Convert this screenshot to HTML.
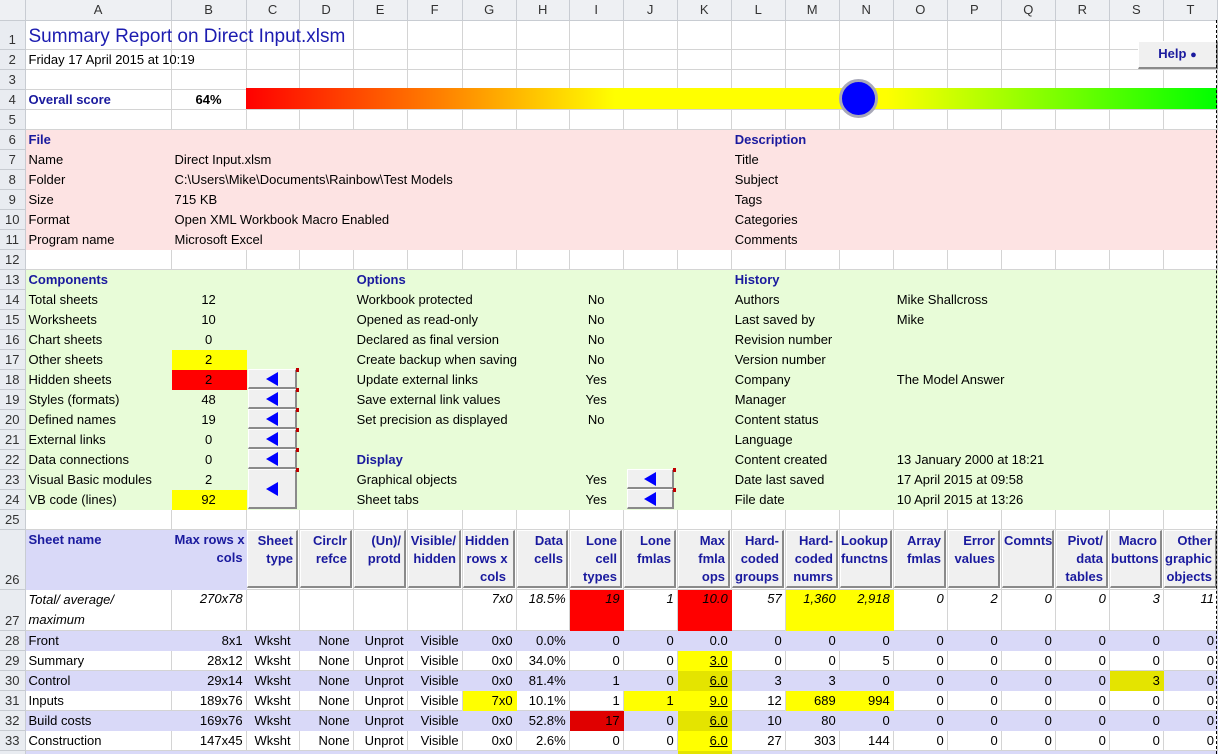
<!DOCTYPE html>
<html><head><meta charset="utf-8"><style>
body{margin:0;background:#fff}
#w{position:relative;width:1218px;height:754px;overflow:hidden;font-family:"Liberation Sans",sans-serif;font-size:13px;color:#000}
table{border-collapse:collapse;table-layout:fixed;width:1218px;position:absolute;left:0;top:0}
td{padding:0 3px;border-right:1px solid #d4d4d4;border-bottom:1px solid #d4d4d4;white-space:nowrap;overflow:visible;vertical-align:bottom;line-height:18px}
td.h{background:#e9ecf1;color:#333;text-align:center;padding:0;border-color:#c8ccd2}
tr.ch td{background:#eef0f3;color:#333;text-align:center;border-color:#c8ccd2;vertical-align:middle}
tr.p td:not(.h){background:#fde3e3;border-color:#fde3e3}
tr.g td:not(.h){background:#e8fcd8;border-color:#e8fcd8}
tr.l td:not(.h){background:#d9d9f8;border-color:#d9d9f8}
.b{font-weight:bold;color:#1a1a9e}
.r{text-align:right}.c{text-align:center}
.y{background:#ffff00!important;border-color:#ffff00!important}
.dy{background:#e4e400!important;border-color:#e4e400!important}
.red{background:#ff0000!important;border-color:#ff0000!important}
.dr{background:#e00000!important;border-color:#e00000!important}
.u{text-decoration:underline}
tr.it td{font-style:italic;vertical-align:top}
.btn{position:absolute;background:#f0f0f0;border-top:1px solid #fff;border-left:1px solid #fff;border-right:2px solid #8a8a8a;border-bottom:2px solid #8a8a8a;box-sizing:border-box}
.btn .a{position:absolute;left:50%;top:50%;margin:-7px 0 0 -6px;width:0;height:0;border-right:12px solid #0000ff;border-top:7px solid transparent;border-bottom:7px solid transparent}
.btn .t{position:absolute;right:-4px;top:-2px;width:3px;height:4px;background:#c00000}
.hb{font-weight:bold;color:#1a1a9e;text-align:right;line-height:18px;padding:1px 3px 0 0}
</style></head><body><div id="w">
<table>
<colgroup><col style="width:25px"><col style="width:146px"><col style="width:75px"><col style="width:53px"><col style="width:54px"><col style="width:54px"><col style="width:55px"><col style="width:54px"><col style="width:53px"><col style="width:54px"><col style="width:54px"><col style="width:54px"><col style="width:54px"><col style="width:54px"><col style="width:54px"><col style="width:54px"><col style="width:54px"><col style="width:54px"><col style="width:54px"><col style="width:54px"><col style="width:54px"></colgroup>
<tr class="ch" style="height:20px"><td></td><td>A</td><td>B</td><td>C</td><td>D</td><td>E</td><td>F</td><td>G</td><td>H</td><td>I</td><td>J</td><td>K</td><td>L</td><td>M</td><td>N</td><td>O</td><td>P</td><td>Q</td><td>R</td><td>S</td><td>T</td></tr>
<tr style="height:29px"><td class="h">1</td><td style="font-size:19px;color:#1c1cb0;line-height:24px">Summary Report on Direct Input.xlsm</td><td></td><td></td><td></td><td></td><td></td><td></td><td></td><td></td><td></td><td></td><td></td><td></td><td></td><td></td><td></td><td></td><td></td><td></td><td></td></tr>
<tr style="height:20px"><td class="h">2</td><td>Friday 17 April 2015 at 10:19</td><td></td><td></td><td></td><td></td><td></td><td></td><td></td><td></td><td></td><td></td><td></td><td></td><td></td><td></td><td></td><td></td><td></td><td></td><td></td></tr>
<tr style="height:20px"><td class="h">3</td><td></td><td></td><td></td><td></td><td></td><td></td><td></td><td></td><td></td><td></td><td></td><td></td><td></td><td></td><td></td><td></td><td></td><td></td><td></td><td></td></tr>
<tr style="height:20px"><td class="h">4</td><td class="b">Overall score</td><td class="c" style="font-weight:bold">64%</td><td></td><td></td><td></td><td></td><td></td><td></td><td></td><td></td><td></td><td></td><td></td><td></td><td></td><td></td><td></td><td></td><td></td><td></td></tr>
<tr style="height:20px"><td class="h">5</td><td></td><td></td><td></td><td></td><td></td><td></td><td></td><td></td><td></td><td></td><td></td><td></td><td></td><td></td><td></td><td></td><td></td><td></td><td></td><td></td></tr>
<tr class="p" style="height:20px"><td class="h">6</td><td class="b">File</td><td></td><td></td><td></td><td></td><td></td><td></td><td></td><td></td><td></td><td></td><td class="b">Description</td><td></td><td></td><td></td><td></td><td></td><td></td><td></td><td></td></tr>
<tr class="p" style="height:20px"><td class="h">7</td><td>Name</td><td>Direct Input.xlsm</td><td></td><td></td><td></td><td></td><td></td><td></td><td></td><td></td><td></td><td>Title</td><td></td><td></td><td></td><td></td><td></td><td></td><td></td><td></td></tr>
<tr class="p" style="height:20px"><td class="h">8</td><td>Folder</td><td>C:\Users\Mike\Documents\Rainbow\Test Models</td><td></td><td></td><td></td><td></td><td></td><td></td><td></td><td></td><td></td><td>Subject</td><td></td><td></td><td></td><td></td><td></td><td></td><td></td><td></td></tr>
<tr class="p" style="height:20px"><td class="h">9</td><td>Size</td><td>715 KB</td><td></td><td></td><td></td><td></td><td></td><td></td><td></td><td></td><td></td><td>Tags</td><td></td><td></td><td></td><td></td><td></td><td></td><td></td><td></td></tr>
<tr class="p" style="height:20px"><td class="h">10</td><td>Format</td><td>Open XML Workbook Macro Enabled</td><td></td><td></td><td></td><td></td><td></td><td></td><td></td><td></td><td></td><td>Categories</td><td></td><td></td><td></td><td></td><td></td><td></td><td></td><td></td></tr>
<tr class="p" style="height:20px"><td class="h">11</td><td>Program name</td><td>Microsoft Excel</td><td></td><td></td><td></td><td></td><td></td><td></td><td></td><td></td><td></td><td>Comments</td><td></td><td></td><td></td><td></td><td></td><td></td><td></td><td></td></tr>
<tr style="height:20px"><td class="h">12</td><td></td><td></td><td></td><td></td><td></td><td></td><td></td><td></td><td></td><td></td><td></td><td></td><td></td><td></td><td></td><td></td><td></td><td></td><td></td><td></td></tr>
<tr class="g" style="height:20px"><td class="h">13</td><td class="b">Components</td><td></td><td></td><td></td><td class="b">Options</td><td></td><td></td><td></td><td></td><td></td><td></td><td class="b">History</td><td></td><td></td><td></td><td></td><td></td><td></td><td></td><td></td></tr>
<tr class="g" style="height:20px"><td class="h">14</td><td>Total sheets</td><td class="c">12</td><td></td><td></td><td>Workbook protected</td><td></td><td></td><td></td><td class="c">No</td><td></td><td></td><td>Authors</td><td></td><td></td><td>Mike Shallcross</td><td></td><td></td><td></td><td></td><td></td></tr>
<tr class="g" style="height:20px"><td class="h">15</td><td>Worksheets</td><td class="c">10</td><td></td><td></td><td>Opened as read-only</td><td></td><td></td><td></td><td class="c">No</td><td></td><td></td><td>Last saved by</td><td></td><td></td><td>Mike</td><td></td><td></td><td></td><td></td><td></td></tr>
<tr class="g" style="height:20px"><td class="h">16</td><td>Chart sheets</td><td class="c">0</td><td></td><td></td><td>Declared as final version</td><td></td><td></td><td></td><td class="c">No</td><td></td><td></td><td>Revision number</td><td></td><td></td><td></td><td></td><td></td><td></td><td></td><td></td></tr>
<tr class="g" style="height:20px"><td class="h">17</td><td>Other sheets</td><td class="c y">2</td><td></td><td></td><td>Create backup when saving</td><td></td><td></td><td></td><td class="c">No</td><td></td><td></td><td>Version number</td><td></td><td></td><td></td><td></td><td></td><td></td><td></td><td></td></tr>
<tr class="g" style="height:20px"><td class="h">18</td><td>Hidden sheets</td><td class="c red">2</td><td></td><td></td><td>Update external links</td><td></td><td></td><td></td><td class="c">Yes</td><td></td><td></td><td>Company</td><td></td><td></td><td>The Model Answer</td><td></td><td></td><td></td><td></td><td></td></tr>
<tr class="g" style="height:20px"><td class="h">19</td><td>Styles (formats)</td><td class="c">48</td><td></td><td></td><td>Save external link values</td><td></td><td></td><td></td><td class="c">Yes</td><td></td><td></td><td>Manager</td><td></td><td></td><td></td><td></td><td></td><td></td><td></td><td></td></tr>
<tr class="g" style="height:20px"><td class="h">20</td><td>Defined names</td><td class="c">19</td><td></td><td></td><td>Set precision as displayed</td><td></td><td></td><td></td><td class="c">No</td><td></td><td></td><td>Content status</td><td></td><td></td><td></td><td></td><td></td><td></td><td></td><td></td></tr>
<tr class="g" style="height:20px"><td class="h">21</td><td>External links</td><td class="c">0</td><td></td><td></td><td></td><td></td><td></td><td></td><td></td><td></td><td></td><td>Language</td><td></td><td></td><td></td><td></td><td></td><td></td><td></td><td></td></tr>
<tr class="g" style="height:20px"><td class="h">22</td><td>Data connections</td><td class="c">0</td><td></td><td></td><td class="b">Display</td><td></td><td></td><td></td><td></td><td></td><td></td><td>Content created</td><td></td><td></td><td>13 January 2000 at 18:21</td><td></td><td></td><td></td><td></td><td></td></tr>
<tr class="g" style="height:20px"><td class="h">23</td><td>Visual Basic modules</td><td class="c">2</td><td></td><td></td><td>Graphical objects</td><td></td><td></td><td></td><td class="c">Yes</td><td></td><td></td><td>Date last saved</td><td></td><td></td><td>17 April 2015 at 09:58</td><td></td><td></td><td></td><td></td><td></td></tr>
<tr class="g" style="height:20px"><td class="h">24</td><td>VB code (lines)</td><td class="c y">92</td><td></td><td></td><td>Sheet tabs</td><td></td><td></td><td></td><td class="c">Yes</td><td></td><td></td><td>File date</td><td></td><td></td><td>10 April 2015 at 13:26</td><td></td><td></td><td></td><td></td><td></td></tr>
<tr style="height:20px"><td class="h">25</td><td></td><td></td><td></td><td></td><td></td><td></td><td></td><td></td><td></td><td></td><td></td><td></td><td></td><td></td><td></td><td></td><td></td><td></td><td></td><td></td></tr>
<tr style="height:60px"><td class="h">26</td><td class="b" style="background:#d9d9f8;border-color:#d9d9f8;vertical-align:top;padding-top:1px">Sheet name</td><td class="b r" style="background:#d9d9f8;border-color:#d9d9f8;vertical-align:top;padding-top:1px">Max rows x<br>cols</td><td></td><td></td><td></td><td></td><td></td><td></td><td></td><td></td><td></td><td></td><td></td><td></td><td></td><td></td><td></td><td></td><td></td><td></td></tr>
<tr class="it" style="height:40px"><td class="h" style="vertical-align:bottom;font-style:normal">27</td><td style="line-height:20px">Total/ average/<br>maximum</td><td class="r">270x78</td><td></td><td></td><td></td><td></td><td class="r">7x0</td><td class="r">18.5%</td><td class="r red">19</td><td class="r">1</td><td class="r red">10.0</td><td class="r">57</td><td class="r y">1,360</td><td class="r y">2,918</td><td class="r">0</td><td class="r">2</td><td class="r">0</td><td class="r">0</td><td class="r">3</td><td class="r">11</td></tr>
<tr class="l" style="height:20px"><td class="h">28</td><td>Front</td><td class="r">8x1</td><td class="c">Wksht</td><td class="r">None</td><td class="r">Unprot</td><td class="r">Visible</td><td class="r">0x0</td><td class="r">0.0%</td><td class="r">0</td><td class="r">0</td><td class="r">0.0</td><td class="r">0</td><td class="r">0</td><td class="r">0</td><td class="r">0</td><td class="r">0</td><td class="r">0</td><td class="r">0</td><td class="r">0</td><td class="r">0</td></tr>
<tr style="height:20px"><td class="h">29</td><td>Summary</td><td class="r">28x12</td><td class="c">Wksht</td><td class="r">None</td><td class="r">Unprot</td><td class="r">Visible</td><td class="r">0x0</td><td class="r">34.0%</td><td class="r">0</td><td class="r">0</td><td class="r y"><span class="u">3.0</span></td><td class="r">0</td><td class="r">0</td><td class="r">5</td><td class="r">0</td><td class="r">0</td><td class="r">0</td><td class="r">0</td><td class="r">0</td><td class="r">0</td></tr>
<tr class="l" style="height:20px"><td class="h">30</td><td>Control</td><td class="r">29x14</td><td class="c">Wksht</td><td class="r">None</td><td class="r">Unprot</td><td class="r">Visible</td><td class="r">0x0</td><td class="r">81.4%</td><td class="r">1</td><td class="r">0</td><td class="r dy"><span class="u">6.0</span></td><td class="r">3</td><td class="r">3</td><td class="r">0</td><td class="r">0</td><td class="r">0</td><td class="r">0</td><td class="r">0</td><td class="r dy">3</td><td class="r">0</td></tr>
<tr style="height:20px"><td class="h">31</td><td>Inputs</td><td class="r">189x76</td><td class="c">Wksht</td><td class="r">None</td><td class="r">Unprot</td><td class="r">Visible</td><td class="r y">7x0</td><td class="r">10.1%</td><td class="r">1</td><td class="r y">1</td><td class="r y"><span class="u">9.0</span></td><td class="r">12</td><td class="r y">689</td><td class="r y">994</td><td class="r">0</td><td class="r">0</td><td class="r">0</td><td class="r">0</td><td class="r">0</td><td class="r">0</td></tr>
<tr class="l" style="height:20px"><td class="h">32</td><td>Build costs</td><td class="r">169x76</td><td class="c">Wksht</td><td class="r">None</td><td class="r">Unprot</td><td class="r">Visible</td><td class="r">0x0</td><td class="r">52.8%</td><td class="r dr">17</td><td class="r">0</td><td class="r dy"><span class="u">6.0</span></td><td class="r">10</td><td class="r">80</td><td class="r">0</td><td class="r">0</td><td class="r">0</td><td class="r">0</td><td class="r">0</td><td class="r">0</td><td class="r">0</td></tr>
<tr style="height:20px"><td class="h">33</td><td>Construction</td><td class="r">147x45</td><td class="c">Wksht</td><td class="r">None</td><td class="r">Unprot</td><td class="r">Visible</td><td class="r">0x0</td><td class="r">2.6%</td><td class="r">0</td><td class="r">0</td><td class="r y"><span class="u">6.0</span></td><td class="r">27</td><td class="r">303</td><td class="r">144</td><td class="r">0</td><td class="r">0</td><td class="r">0</td><td class="r">0</td><td class="r">0</td><td class="r">0</td></tr>
<tr class="l" style="height:20px"><td class="h">34</td><td></td><td></td><td></td><td></td><td></td><td></td><td></td><td></td><td></td><td></td><td class="dy"></td><td></td><td></td><td></td><td></td><td></td><td></td><td></td><td></td><td></td></tr>
</table>

<!-- score bar -->
<div style="position:absolute;left:246px;top:88px;width:971px;height:21px;background:linear-gradient(to right,#ff0000 0%,#ff8000 20%,#ffff00 38%,#ffff00 66%,#00ff00 100%)"></div>
<div style="position:absolute;left:839px;top:79px;width:33px;height:33px;border-radius:50%;background:#0000ff;border:3px solid #a8a8b8"></div>
<div class="btn" style="left:1138px;top:41px;width:80px;height:28px;font-weight:bold;color:#1a1a9e;text-align:center;line-height:24px">Help <span style="font-size:11px">●</span></div>

<!-- left buttons -->
<div class="btn" style="left:248px;top:369px;width:49px;height:20px"><div class="a"></div><div class="t"></div></div>
<div class="btn" style="left:248px;top:389px;width:49px;height:20px"><div class="a"></div><div class="t"></div></div>
<div class="btn" style="left:248px;top:409px;width:49px;height:20px"><div class="a"></div><div class="t"></div></div>
<div class="btn" style="left:248px;top:429px;width:49px;height:20px"><div class="a"></div><div class="t"></div></div>
<div class="btn" style="left:248px;top:449px;width:49px;height:20px"><div class="a"></div><div class="t"></div></div>
<div class="btn" style="left:248px;top:469px;width:49px;height:40px"><div class="a"></div><div class="t"></div></div>
<div class="btn" style="left:627px;top:469px;width:47px;height:20px"><div class="a"></div><div class="t"></div></div>
<div class="btn" style="left:627px;top:489px;width:47px;height:20px"><div class="a"></div><div class="t"></div></div>

<!-- header buttons row 26 -->
<div class="btn hb" style="left:247px;top:530px;width:51px;height:58px">Sheet<br>type</div>
<div class="btn hb" style="left:300px;top:530px;width:52px;height:58px">Circlr<br>refce</div>
<div class="btn hb" style="left:354px;top:530px;width:52px;height:58px">(Un)/<br>protd</div>
<div class="btn hb" style="left:408px;top:530px;width:53px;height:58px">Visible/<br>hidden</div>
<div class="btn hb" style="left:463px;top:530px;width:52px;height:58px;text-align:center">Hidden<br>rows x<br><span style="padding-left:12px">cols</span></div>
<div class="btn hb" style="left:517px;top:530px;width:51px;height:58px">Data<br>cells</div>
<div class="btn hb" style="left:570px;top:530px;width:52px;height:58px">Lone<br>cell<br>types</div>
<div class="btn hb" style="left:624px;top:530px;width:52px;height:58px">Lone<br>fmlas</div>
<div class="btn hb" style="left:678px;top:530px;width:52px;height:58px">Max<br>fmla<br>ops</div>
<div class="btn hb" style="left:732px;top:530px;width:52px;height:58px">Hard-<br>coded<br>groups</div>
<div class="btn hb" style="left:786px;top:530px;width:52px;height:58px">Hard-<br>coded<br>numrs</div>
<div class="btn hb" style="left:840px;top:530px;width:52px;height:58px">Lookup<br>functns</div>
<div class="btn hb" style="left:894px;top:530px;width:52px;height:58px">Array<br>fmlas</div>
<div class="btn hb" style="left:948px;top:530px;width:52px;height:58px">Error<br>values</div>
<div class="btn hb" style="left:1002px;top:530px;width:52px;height:58px;text-align:left;padding-left:1px">Comnts</div>
<div class="btn hb" style="left:1056px;top:530px;width:52px;height:58px">Pivot/<br>data<br>tables</div>
<div class="btn hb" style="left:1110px;top:530px;width:52px;height:58px">Macro<br>buttons</div>
<div class="btn hb" style="left:1164px;top:530px;width:53px;height:58px">Other<br>graphic<br>objects</div>
<div style="position:absolute;left:1216px;top:20px;width:0;height:734px;border-left:1px dashed #000"></div>
</div></body></html>
